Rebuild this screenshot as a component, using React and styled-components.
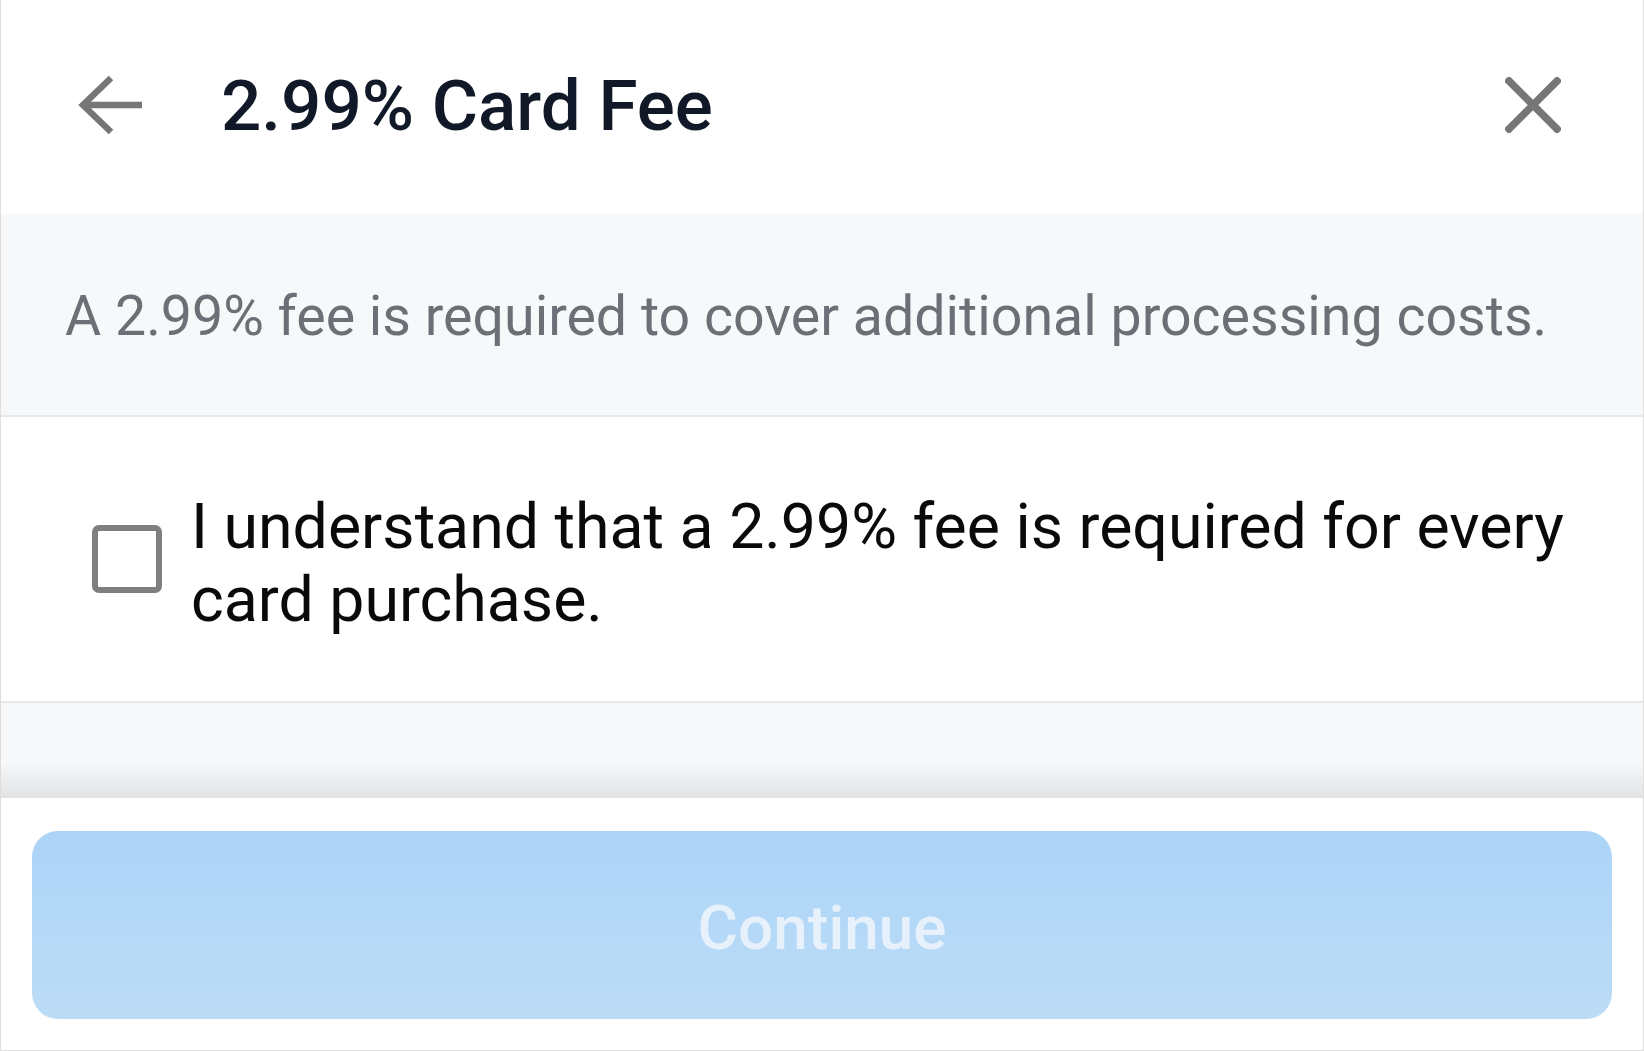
import React from "react";
import styled, { createGlobalStyle } from "styled-components";

const Global = createGlobalStyle`
  html, body { margin: 0; padding: 0; background: #ffffff; }
  body { font-family: Roboto, "Noto Sans", "Liberation Sans", sans-serif; }
  * { box-sizing: border-box; }
`;

const Frame = styled.div`
  width: 1644px;
  height: 1051px;
  display: flex;
  flex-direction: column;
  background: #ffffff;
  border-left: 1px solid #dedede;
  border-right: 1px solid #dedede;
  border-bottom: 1px solid #dedede;
  overflow: hidden;
`;

const Header = styled.header`
  height: 214px;
  flex: none;
  display: flex;
  align-items: center;
  padding: 0 82px 4px 77px;
`;

const IconButton = styled.button`
  border: 0;
  background: none;
  padding: 0;
  display: flex;
  align-items: center;
  justify-content: center;
  color: #767676;
  cursor: pointer;
`;

const Title = styled.h1`
  margin: 0 0 0 79px;
  flex: 1;
  font-size: 71px;
  font-weight: 500;
  color: #111827;
  letter-spacing: 0;
  line-height: 1;
`;

const InfoBand = styled.section`
  height: 203px;
  flex: none;
  display: flex;
  align-items: center;
  padding: 6px 64px 0 64px;
  background: #f7f8fa;
  border-bottom: 2px solid #e6e8eb;
`;

const InfoText = styled.p`
  margin: 0;
  font-size: 55.5px;
  font-weight: 400;
  color: #6b6f76;
  line-height: 1.2;
  white-space: nowrap;
`;

const CheckRow = styled.label`
  height: 286px;
  flex: none;
  display: flex;
  align-items: center;
  gap: 29px;
  padding: 0 40px 0 91px;
  border-bottom: 2px solid #e6e8eb;
  cursor: pointer;
`;

const Box = styled.span`
  width: 70px;
  height: 68px;
  flex: none;
  border: 6px solid #7f7f7f;
  border-radius: 7px;
  background: #ffffff;
`;

const CheckText = styled.span`
  font-size: 62.6px;
  line-height: 73px;
  color: #0a0a0a;
  max-width: 1420px;
  padding-top: 8px;
`;

const Spacer = styled.div`
  height: 95px;
  flex: none;
  background: linear-gradient(to bottom, #f7f8fa 0%, #f7f8fa 62%, #e1e3e5 100%);
`;

const Footer = styled.footer`
  flex: 1;
  padding: 33px 31px 0 31px;
  background: #ffffff;
`;

const ContinueButton = styled.button`
  width: 100%;
  height: 188px;
  border: 0;
  border-radius: 26px;
  background: linear-gradient(to bottom, #acd4f8, #bcdcf6);
  color: #e6f1fc;
  font-family: Roboto, "Noto Sans", sans-serif;
  font-size: 62px;
  font-weight: 500;
  display: flex;
  align-items: center;
  justify-content: center;
  padding-top: 6px;
`;

const BackArrow = () => (
  <svg width="64" height="60" viewBox="0 0 64 60" fill="none">
    <path d="M33 3 L5 30 L33 57" stroke="currentColor" strokeWidth="6.5" strokeLinejoin="miter" />
    <path d="M5 30 H64" stroke="currentColor" strokeWidth="6.5" />
  </svg>
);

const CloseIcon = () => (
  <svg width="56" height="56" viewBox="0 0 56 56" fill="none">
    <path d="M4 4 L52 52 M52 4 L4 52" stroke="currentColor" strokeWidth="7.5" strokeLinecap="square" />
  </svg>
);

export default function App() {
  return (
    <>
      <Global />
      <Frame>
        <Header>
          <IconButton aria-label="Back"><BackArrow /></IconButton>
          <Title>2.99% Card Fee</Title>
          <IconButton aria-label="Close"><CloseIcon /></IconButton>
        </Header>
        <InfoBand>
          <InfoText>A 2.99% fee is required to cover additional processing costs.</InfoText>
        </InfoBand>
        <CheckRow>
          <Box />
          <CheckText>I understand that a 2.99% fee is required for every card purchase.</CheckText>
        </CheckRow>
        <Spacer />
        <Footer>
          <ContinueButton disabled>Continue</ContinueButton>
        </Footer>
      </Frame>
    </>
  );
}
